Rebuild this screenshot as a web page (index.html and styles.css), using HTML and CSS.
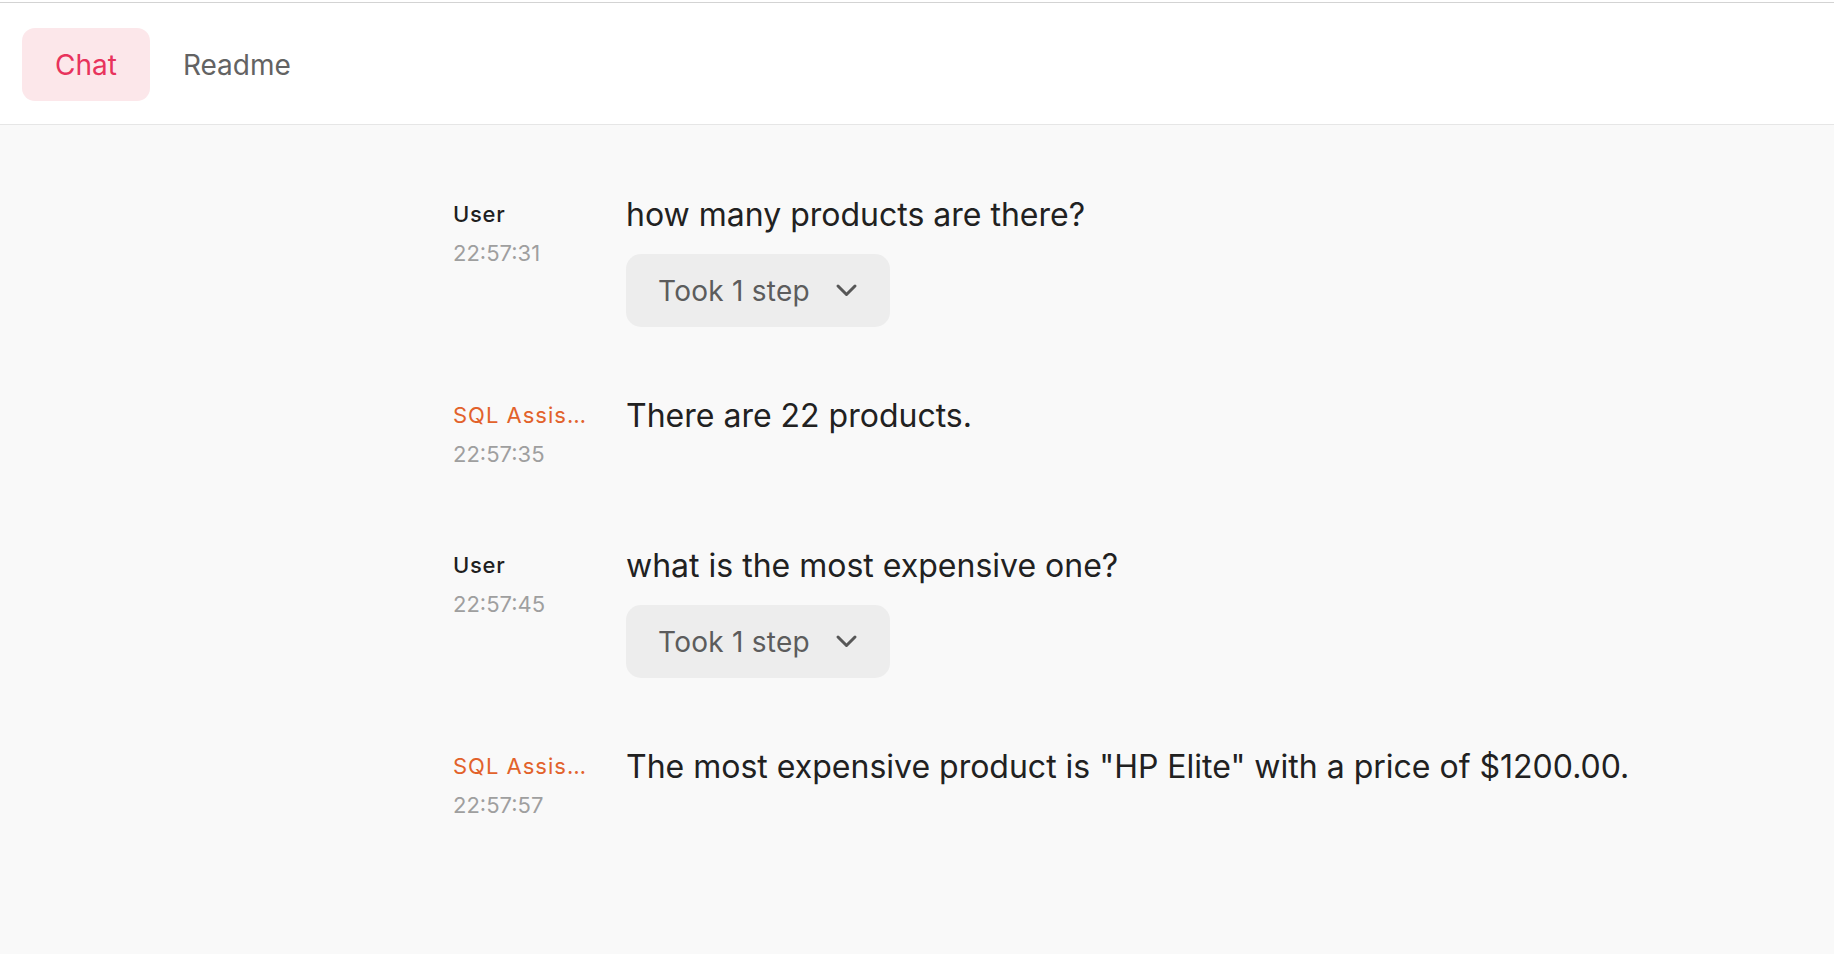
FILE: index.html
```html
<!DOCTYPE html>
<html>
<head>
<meta charset="utf-8">
<title>Chat</title>
<link rel="stylesheet" href="styles.css">
</head>
<body>
<div class="app">
  <header class="header">
    <nav class="tabs">
      <div class="tab tab-active">Chat</div>
      <div class="tab">Readme</div>
    </nav>
  </header>
  <main class="main">
    <div class="chat">
      <div class="row">
        <div class="meta">
          <div class="author">User</div>
          <div class="time">22:57:31</div>
        </div>
        <div class="body">
          <div class="text">how many products are there?</div>
          <div class="step">
            <span class="step-label">Took 1 step</span>
            <svg class="chev" width="23" height="15" viewBox="0 0 23 15"><path d="M3 3 L11.5 11.5 L20 3" fill="none" stroke="#575757" stroke-width="3" stroke-linecap="round" stroke-linejoin="round"/></svg>
          </div>
        </div>
      </div>
      <div class="row">
        <div class="meta">
          <div class="author author-bot">SQL Assistant</div>
          <div class="time">22:57:35</div>
        </div>
        <div class="body">
          <div class="text">There are 22 products.</div>
        </div>
      </div>
      <div class="row">
        <div class="meta">
          <div class="author">User</div>
          <div class="time">22:57:45</div>
        </div>
        <div class="body">
          <div class="text">what is the most expensive one?</div>
          <div class="step">
            <span class="step-label">Took 1 step</span>
            <svg class="chev" width="23" height="15" viewBox="0 0 23 15"><path d="M3 3 L11.5 11.5 L20 3" fill="none" stroke="#575757" stroke-width="3" stroke-linecap="round" stroke-linejoin="round"/></svg>
          </div>
        </div>
      </div>
      <div class="row">
        <div class="meta">
          <div class="author author-bot">SQL Assistant</div>
          <div class="time">22:57:57</div>
        </div>
        <div class="body">
          <div class="text">The most expensive product is "HP Elite" with a price of $1200.00.</div>
        </div>
      </div>
    </div>
  </main>
</div>
</body>
</html>
```

FILE: styles.css
```css
html, body {
  margin: 0;
  padding: 0;
  background: #ffffff;
  font-family: Inter, "Noto Sans", "Liberation Sans", sans-serif;
}

.app {
  display: flex;
  flex-direction: column;
  height: 100vh;
  padding-top: 2px;
  box-sizing: border-box;
}

.header {
  border-top: 1px solid #d3d3d3;
  border-bottom: 1px solid #e6e6e6;
  padding: 25px 0 23px 22px;
  background: #ffffff;
}

.tabs {
  display: flex;
}

.tab {
  height: 73px;
  display: flex;
  align-items: center;
  padding: 0 33px;
  font-size: 28px;
  color: #636363;
  border-radius: 13px;
}

.tab-active {
  background: #fce7ea;
  color: #e8335c;
}

.main {
  flex: 1;
  background: #f9f9f9;
  padding: 68px 40px 0 453px;
}

.chat {
  display: flex;
  flex-direction: column;
  gap: 67px;
}

.row {
  display: flex;
  align-items: flex-start;
}

.meta {
  width: 134px;
  margin-right: 39px;
  padding: 6px 0 8px;
  flex-shrink: 0;
}

.author {
  font-size: 22px;
  line-height: 30px;
  font-weight: 500;
  letter-spacing: 0.7px;
  color: #1f1f1f;
  white-space: nowrap;
  overflow: hidden;
  text-overflow: ellipsis;
}

.author-bot {
  color: #e2622b;
  font-weight: 400;
  letter-spacing: 1px;
}

.time {
  margin-top: 9px;
  font-size: 22px;
  line-height: 30px;
  color: #9f9f9f;
}

.text {
  font-size: 32px;
  line-height: 44px;
  color: #212121;
}

.step {
  margin-top: 17px;
  display: inline-flex;
  align-items: center;
  height: 73px;
  padding: 0 32px 0 32px;
  background: #ededed;
  border-radius: 15px;
  box-sizing: border-box;
}

.step-label {
  font-size: 28px;
  letter-spacing: 0.25px;
  color: #5c5c5c;
}

.chev {
  margin-left: 25px;
  display: block;
}
```
